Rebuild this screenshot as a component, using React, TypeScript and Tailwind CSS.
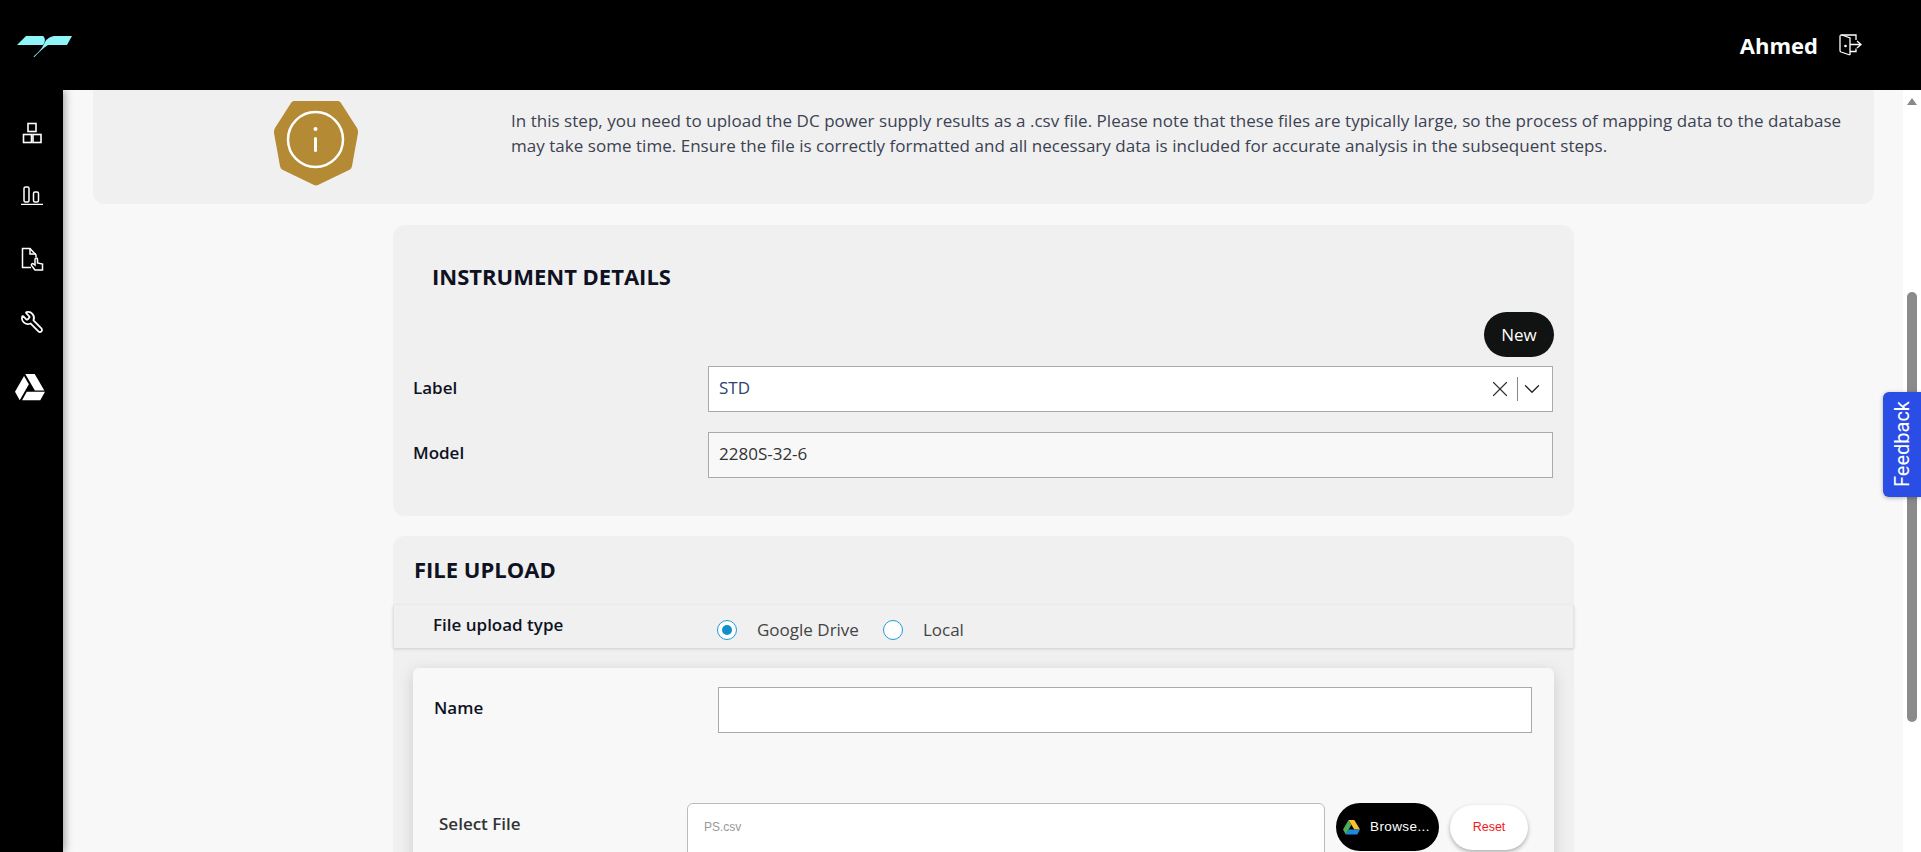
import { FaGoogleDrive } from 'react-icons/fa';
import { X, ChevronDown, Wrench } from 'lucide-react';

function Logo() {
  return (
    <svg width="56" height="21" viewBox="0 0 56 21" fill="#8ff5f8" className="mt-[3px]">
      <path d="M9 0 H26 C28.500 2 28.500 5.500 26 9 H0 Z" />
      <path d="M55 0 H37 C31 1.500 29 4 27.500 7 C25 13 20.500 17 16.500 20.500 L17.500 21 C21.500 16.500 25.500 12.500 31 9 H50 Z" />
    </svg>
  );
}

function BoxesIcon() {
  return (
    <svg width="22" height="22" viewBox="0 0 22 22" fill="none" stroke="#fff" strokeWidth="1.6">
      <rect x="7" y="1.500" width="8" height="8" />
      <rect x="2.500" y="12.500" width="8" height="8" />
      <rect x="12" y="12.500" width="8" height="8" />
    </svg>
  );
}

function BarsIcon() {
  return (
    <svg width="24" height="20" viewBox="0 0 24 20" fill="none" stroke="#fff" strokeWidth="1.500" className="-ml-px">
      <rect x="5" y="2" width="5" height="15" rx="1.500" />
      <rect x="14.500" y="7" width="5" height="10" rx="1.500" />
      <path d="M2 19.500 H24" />
    </svg>
  );
}

function FileHandIcon() {
  return (
    <svg width="24" height="24" viewBox="0 0 24 24" fill="none" stroke="#fff" strokeWidth="1.500">
      <path d="M11 20.500 H2.500 V1.500 H10 L16 8 V10" />
      <path d="M10 1.500 V7 H16" />
      <path d="M15 23 L11.500 18.500 C11 17 12.500 16 13.500 17 L15 18 V12.500 C15 10.500 17.500 10.500 17.500 12.500 V16 L22.500 17 V23 Z" />
    </svg>
  );
}

function LogoutIcon() {
  return (
    <svg width="23" height="22" viewBox="0 0 23 22" fill="none" stroke="#fff" strokeWidth="1.300">
      <path d="M11 21 L2 18 C1.300 17.700 1 17.300 1 16.500 V2.500 C1 1.500 1.500 1 2.500 1 H17 V6" />
      <path d="M11 21 V4 L3 1" />
      <path d="M11 17.500 H17 V14.500" />
      <path d="M11 10.500 H22 M18 7 L22 10.500 L18 14" />
      <circle cx="6.500" cy="12" r="0.700" fill="#fff" />
    </svg>
  );
}

function InfoBadge() {
  return (
    <svg width="86" height="87" viewBox="0 0 86 87">
      <path d="M22 1 H64 C66 1 67 1.500 68 3 L84 28 C85 30 85 31 85 33 L79 66 C78.500 68 78 69 76 70 L45 85 C43.500 85.500 42.500 85.500 41 85 L10 70 C8 69 7.500 68 7 66 L1 33 C1 31 1 30 2 28 L18 3 C19 1.500 20 1 22 1 Z" fill="#b58a35" />
      <circle cx="42.500" cy="39.500" r="27.500" fill="none" stroke="#fff" strokeWidth="2.500" />
      <circle cx="42.500" cy="29" r="2" fill="#fff" />
      <rect x="41" y="37" width="3" height="15" rx="1.500" fill="#fff" />
    </svg>
  );
}

function DriveColorIcon() {
  return (
    <svg width="17" height="15" viewBox="0 0 17 15">
      <path d="M5.500 0 L0 9.500 L2.800 14.500 L8.300 5 Z" fill="#4caf50" />
      <path d="M5.500 0 H11.300 L17 9.500 H11.300 Z" fill="#fbc02d" />
      <path d="M5.500 9.500 H17 L14.200 14.500 H2.800 Z" fill="#1e88e5" />
    </svg>
  );
}

export default function App() {
  return (
    <div className="h-[852px] overflow-hidden flex flex-col bg-white relative font-['Open_Sans',sans-serif] text-[#333]">
      {/* Top bar */}
      <header className="h-[90px] shrink-0 bg-black flex items-center justify-between pl-[17px] pr-[59px]">
        <Logo />
        <div className="flex items-center gap-[21px]">
          <span className="text-white font-bold text-[22px]">Ahmed</span>
          <LogoutIcon />
        </div>
      </header>

      <div className="flex flex-1 min-h-0">
        {/* Sidebar */}
        <aside className="w-[63px] shrink-0 bg-black flex flex-col items-center pt-[32px] shadow-[2px_0_8px_rgba(0,0,0,0.35)] z-10">
          <div className="h-[63px] flex justify-center"><BoxesIcon /></div>
          <div className="h-[62px] flex justify-center"><BarsIcon /></div>
          <div className="h-[63px] flex justify-center"><FileHandIcon /></div>
          <div className="h-[62px] flex justify-center"><Wrench size={24} color="#fff" strokeWidth={1.75} className="-scale-x-100" /></div>
          <FaGoogleDrive size={30} color="#fff" className="-ml-[3px]" />
        </aside>

        {/* Main */}
        <main className="flex-1 min-w-0 bg-[#f8f8f8] pl-[30px] pr-[29px]">
          <div className="h-[114px] bg-[#f0f0f0] rounded-b-xl flex">
            <div className="w-[418px] shrink-0 pl-[180px] pt-[10px]"><InfoBadge /></div>
            <p className="pt-[18px] pr-[30px] text-[17px] leading-[25px] tracking-[0.03px] text-[#3b4252]">
              In this step, you need to upload the DC power supply results as a .csv file. Please note that these files are typically large, so the process of mapping data to the database may take some time. Ensure the file is correctly formatted and all necessary data is included for accurate analysis in the subsequent steps.
            </p>
          </div>

          <div className="w-[1181px] ml-[300px]">
            {/* Instrument details */}
            <section className="mt-[21px] h-[291px] bg-[#f0f0f0] rounded-xl pt-[35px] pl-[20px] pr-[21px]">
              <h2 className="pl-[19px] text-[22px] leading-[32px] font-bold text-[#0f1222]">INSTRUMENT DETAILS</h2>
              <div className="flex justify-end mt-[20px] -mr-px">
                <button className="w-[70px] h-[45px] rounded-full bg-[#111212] text-white text-[17px]">New</button>
              </div>
              <div className="flex items-center mt-[9px] h-[46px]">
                <label className="w-[295px] text-[17px] font-semibold text-[#0f1222] -mt-[3px]">Label</label>
                <div className="flex-1 h-full bg-white border border-[#aaa] flex items-center pl-[10px] pr-[7px]">
                  <span className="flex-1 text-[17px] text-[#2d4373] -mt-[2px]">STD</span>
                  <X size={26} color="#333" strokeWidth={1.100} />
                  <span className="w-px h-[24px] bg-[#888] ml-[4px] mr-[1px]" />
                  <ChevronDown size={26} color="#222" strokeWidth={1.200} />
                </div>
              </div>
              <div className="flex items-center mt-[20px] h-[46px]">
                <label className="w-[295px] text-[17px] font-semibold text-[#0f1222] -mt-[5px]">Model</label>
                <div className="flex-1 h-full bg-[#f8f8f8] border border-[#aaa] flex items-center pl-[10px] pb-[3px] text-[17px] text-[#333]">2280S-32-6</div>
              </div>
            </section>

            {/* File upload */}
            <section className="mt-[20px] h-[340px] bg-[#f0f0f0] rounded-t-xl">
              <h2 className="pl-[21px] pt-[18px] h-[69px] text-[22px] leading-[30px] font-bold text-[#0f1222]">FILE UPLOAD</h2>
              <div className="h-[43px] flex shadow-[0_1px_3px_rgba(0,0,0,0.15)] border-x border-[#e4e4e4]">
                <span className="w-[323px] pl-[39px] pt-[7px] text-[17px] font-semibold text-[#0f1222]">File upload type</span>
                <div className="flex items-center gap-[20px] pt-[6px] text-[17px] text-[#444]">
                  <span className="w-[20px] h-[20px] rounded-full border border-[#1e9ad6] bg-white flex items-center justify-center">
                    <span className="w-[10px] h-[10px] rounded-full bg-[#1090c8]" />
                  </span>
                  <span>Google Drive</span>
                  <span className="ml-[4px] w-[20px] h-[20px] rounded-full border border-[#1e9ad6] bg-white" />
                  <span>Local</span>
                </div>
              </div>
              <div className="mx-[20px] mt-[20px] h-[228px] bg-[#f8f8f8] rounded-md shadow-[0_4px_16px_rgba(0,0,0,0.15)] pl-[21px] pr-[22px] pt-[19px]">
                <div className="flex items-center h-[46px]">
                  <label className="w-[284px] text-[17px] font-semibold text-[#0f1222] -mt-[4px]">Name</label>
                  <div className="flex-1 h-full bg-white border border-[#aaa]" />
                </div>
                <div className="flex mt-[70px]">
                  <label className="w-[253px] pl-[5px] pt-[8px] text-[17px] font-semibold text-[#333]">Select File</label>
                  <div className="w-[638px] h-[60px] bg-white border border-[#bbb] rounded-md pl-[16px] pt-[14px] font-['Liberation_Sans',sans-serif] text-[12px] text-[#999]">PS.csv</div>
                  <button className="ml-[11px] w-[103px] h-[48px] rounded-full bg-black flex items-center gap-[10px] pl-[7px] font-['Liberation_Sans',sans-serif] text-[13.500px] tracking-[0.4px] text-white">
                    <DriveColorIcon />
                    <span>Browse...</span>
                  </button>
                  <button className="ml-[11px] mt-[2px] w-[78px] h-[45px] rounded-full bg-white shadow-[0_2px_4px_rgba(0,0,0,0.3)] font-['Liberation_Sans',sans-serif] text-[12.500px] text-[#f01818]">Reset</button>
                </div>
              </div>
            </section>
          </div>
        </main>

        {/* Scrollbar */}
        <div className="w-[18px] shrink-0 bg-white flex flex-col items-center pt-[8px]">
          <span className="w-0 h-0 border-x-[5px] border-x-transparent border-b-[7px] border-b-[#888]" />
          <span className="mt-[187px] w-[10px] h-[430px] rounded-full bg-[#8a8a8a]" />
        </div>
      </div>

      {/* Feedback tab */}
      <button className="absolute right-0 top-[392px] w-[38px] h-[105px] bg-[#2a4de5] rounded-l-md shadow-[0_1px_4px_rgba(0,0,0,0.3)] flex items-center justify-center">
        <span className="[writing-mode:vertical-rl] rotate-180 text-white text-[20px] font-['Roboto',sans-serif]">Feedback</span>
      </button>
    </div>
  );
}
